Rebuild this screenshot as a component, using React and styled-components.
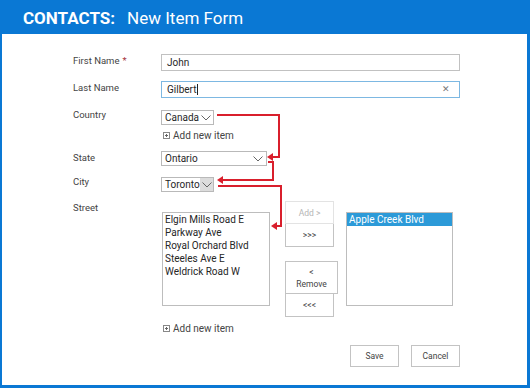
import React from "react";
import styled, { createGlobalStyle } from "styled-components";

const Global = createGlobalStyle`
  html, body { margin: 0; padding: 0; background: #fff; }
  body { width: 530px; height: 388px; overflow: hidden; }
`;

const Page = styled.div`
  position: relative;
  width: 530px;
  height: 388px;
  box-sizing: border-box;
  display: flex;
  flex-direction: column;
  background: #0a78d4;
`;

const Header = styled.div`
  height: 34px;
  display: flex;
  align-items: center;
  padding-left: 23px;
  color: #fff;
  font-family: Roboto, "Liberation Sans", sans-serif;
  font-size: 17px;
  gap: 12px;
  padding-top: 1px;
  box-sizing: border-box;
`;

const Strong = styled.span`
  font-weight: 700;
`;

const Body = styled.div`
  flex: 1;
  background: #fff;
  margin: 0 3px 3px 2px;
  padding: 20px 0 0 71px;
  font-family: Roboto, "Liberation Sans", sans-serif;
  font-size: 10px;
  color: #444;
`;

const Row = styled.div`
  display: grid;
  grid-template-columns: 88px auto;
  align-items: start;
  margin-bottom: ${(p) => p.$mb || 0}px;
`;

const Label = styled.div`
  margin-top: ${(p) => p.$mt ?? 0}px;
  color: #444;
  font-size: 9.5px;
  line-height: 16px;
`;

const Req = styled.span`
  color: #a5323a;
  margin-left: 3px;
`;

const Input = styled.div`
  width: 299px;
  height: 17px;
  box-sizing: border-box;
  border: 1px solid ${(p) => (p.$focus ? "#7db8e2" : "#c1c1c1")};
  display: flex;
  align-items: center;
  padding: 0 5px;
  color: #262626;
  font-size: 10px;
`;

const Caret = styled.span`
  display: inline-block;
  width: 1px;
  height: 11px;
  background: #222;
`;

const Clear = styled.span`
  margin-left: auto;
  margin-right: 4px;
  color: #777;
  font-size: 9px;
  line-height: 1;
`;

const Select = styled.div`
  width: ${(p) => p.$w}px;
  height: 15px;
  box-sizing: border-box;
  border: 1px solid #b9b9b9;
  display: flex;
  align-items: center;
  padding-left: 3px;
  color: #262626;
  font-size: 10px;
  background: #fff;
`;

const Chevron = styled.span`
  margin-left: auto;
  align-self: stretch;
  width: ${(p) => (p.$boxed ? 13 : 14)}px;
  display: flex;
  align-items: center;
  justify-content: center;
  background: ${(p) => (p.$boxed ? "#dcdcdc" : "transparent")};
  margin-right: ${(p) => (p.$boxed ? 0 : 1)}px;
`;

const AddNew = styled.div`
  display: flex;
  align-items: center;
  gap: 3px;
  height: 12px;
  margin-top: ${(p) => p.$mt}px;
  margin-left: 2px;
  color: #444;
  font-size: 10px;
`;

const StreetArea = styled.div`
  display: flex;
  flex-direction: column;
`;

const Picker = styled.div`
  display: flex;
  align-items: flex-start;
`;

const List = styled.div`
  width: ${(p) => p.$w}px;
  height: 94px;
  box-sizing: border-box;
  border: 1px solid #bdbdbd;
  margin-top: 11px;
  margin-left: ${(p) => p.$ml}px;
  display: flex;
  flex-direction: column;
  color: #262626;
  font-size: 10px;
  line-height: 13px;
`;

const Item = styled.div`
  padding-left: 2px;
  background: ${(p) => (p.$sel ? "#2c9ad8" : "transparent")};
  color: ${(p) => (p.$sel ? "#fff" : "#262626")};
`;

const BtnCol = styled.div`
  display: flex;
  flex-direction: column;
  margin-left: 15px;
`;

const SmallBtn = styled.div`
  width: ${(p) => p.$w || 49}px;
  height: ${(p) => p.$h || 23}px;
  box-sizing: border-box;
  border: 1px solid ${(p) => (p.$disabled ? "#e3e3e3" : "#c3c3c3")};
  border-top-width: ${(p) => (p.$noTop ? 0 : 1)}px;
  margin-top: ${(p) => p.$mt || 0}px;
  display: flex;
  flex-direction: column;
  align-items: center;
  justify-content: center;
  font-size: 8.5px;
  line-height: 12px;
  color: ${(p) => (p.$disabled ? "#b5b5b5" : "#444")};
  background: #fff;
`;

const Actions = styled.div`
  width: 299px;
  display: flex;
  justify-content: flex-end;
  gap: 12px;
  margin-top: 11px;
`;

const ActionBtn = styled.div`
  width: 49px;
  height: 22px;
  box-sizing: border-box;
  border: 1px solid #c3c3c3;
  display: flex;
  align-items: center;
  justify-content: center;
  font-size: 8.5px;
  color: #444;
`;

const Overlay = styled.svg`
  position: absolute;
  left: 0;
  top: 0;
  pointer-events: none;
`;

const Down = () => (
  <svg width="10" height="6" viewBox="0 0 10 6">
    <path d="M0.5 0.5 L5 5 L9.5 0.5" fill="none" stroke="#666" strokeWidth="1" />
  </svg>
);

const PlusBox = () => (
  <svg width="7" height="7" viewBox="0 0 7 7">
    <rect x="0.5" y="0.5" width="6" height="6" fill="#fff" stroke="#888" />
    <path d="M2 3.5 H5 M3.5 2 V5" stroke="#666" strokeWidth="1" />
  </svg>
);

const RED = "#d91f2c";

export default function App() {
  return (
    <>
      <Global />
      <Page>
        <Header>
          <Strong>CONTACTS:</Strong>
          <span>New Item Form</span>
        </Header>
        <Body>
          <Row $mb={10}>
            <Label $mt={-1}>
              First Name<Req>*</Req>
            </Label>
            <Input>John</Input>
          </Row>
          <Row $mb={12}>
            <Label $mt={-1}>Last Name</Label>
            <Input $focus>
              Gilbert<Caret />
              <Clear>✕</Clear>
            </Input>
          </Row>
          <Row $mb={10}>
            <Label $mt={-3}>Country</Label>
            <div>
              <Select $w={53}>
                Canada
                <Chevron>
                  <Down />
                </Chevron>
              </Select>
              <AddNew $mt={4}>
                <PlusBox />
                Add new item
              </AddNew>
            </div>
          </Row>
          <Row $mb={11}>
            <Label $mt={-1}>State</Label>
            <Select $w={106}>
              Ontario
              <Chevron>
                <Down />
              </Chevron>
            </Select>
          </Row>
          <Row $mb={9}>
            <Label $mt={-3}>City</Label>
            <Select $w={53}>
              Toronto
              <Chevron $boxed>
                <Down />
              </Chevron>
            </Select>
          </Row>
          <Row>
            <Label $mt={-1}>Street</Label>
            <StreetArea>
              <Picker>
                <List $w={108} $ml={1}>
                  <Item>Elgin Mills Road E</Item>
                  <Item>Parkway Ave</Item>
                  <Item>Royal Orchard Blvd</Item>
                  <Item>Steeles Ave E</Item>
                  <Item>Weldrick Road W</Item>
                </List>
                <BtnCol>
                  <SmallBtn $disabled>Add &gt;</SmallBtn>
                  <SmallBtn $noTop>&gt;&gt;&gt;</SmallBtn>
                  <SmallBtn $w={53} $h={33} $mt={14}>
                    <span>&lt;</span>
                    <span>Remove</span>
                  </SmallBtn>
                  <SmallBtn $noTop>&lt;&lt;&lt;</SmallBtn>
                </BtnCol>
                <List $w={107} $ml={8}>
                  <Item $sel>Apple Creek Blvd</Item>
                </List>
              </Picker>
              <AddNew $mt={5}>
                <PlusBox />
                Add new item
              </AddNew>
              <Actions>
                <ActionBtn>Save</ActionBtn>
                <ActionBtn>Cancel</ActionBtn>
              </Actions>
            </StreetArea>
          </Row>
        </Body>
        <Overlay width="530" height="388" viewBox="0 0 530 388">
          <g fill="none" stroke={RED} strokeWidth="2">
            <path d="M217 115 H279 V157 H272" />
            <path d="M268 162 H273 V180 H222" />
            <path d="M218 186 H281 V226 H276" />
          </g>
          <g fill={RED}>
            <path d="M267 157 L273 153 L273 161 Z" />
            <path d="M217 180 L223 176 L223 184 Z" />
            <path d="M271 226 L277 222 L277 230 Z" />
          </g>
        </Overlay>
      </Page>
    </>
  );
}
